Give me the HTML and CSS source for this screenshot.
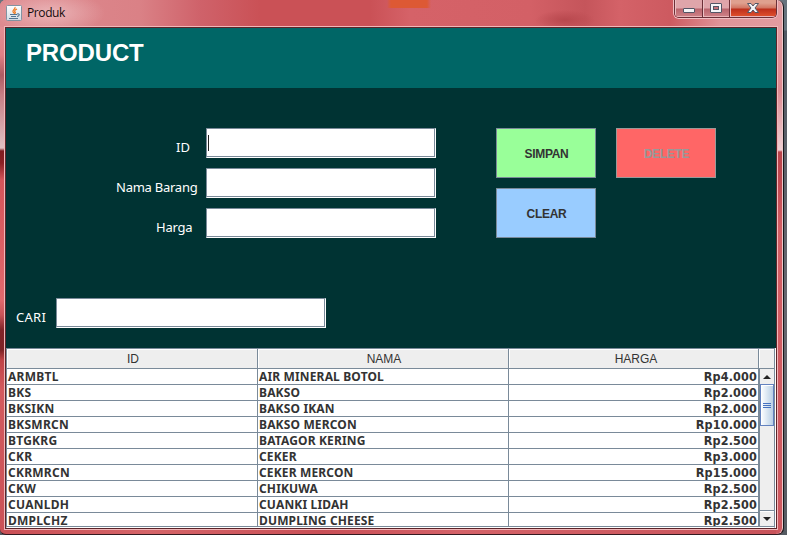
FILE: index.html
```html
<!DOCTYPE html>
<html lang="id">
<head>
<meta charset="utf-8">
<title>Produk</title>
<link rel="stylesheet" href="styles.css">
</head>
<body>
<div class="window">
  <header class="titlebar">
    <svg class="java" width="16" height="16" viewBox="0 0 16 16">
      <defs><linearGradient id="tile" x2="0" y2="1"><stop stop-color="#fff"/><stop offset="1" stop-color="#cfdbe4"/></linearGradient></defs>
      <rect x=".5" y=".5" width="15" height="15" rx="1" fill="url(#tile)" stroke="#8293a2"/>
      <path d="M9 2c1 2-3 3-2 5l1 1M11 4c-2 1-3 2-2 3 1 1 0 1-1 2" fill="none" stroke="#ef7b22" stroke-width="1.2"/>
      <path d="M4 9.5h7M5 11.5h5M3 13.5h9M11 9c3-1 3 2 0 2.500" fill="none" stroke="#537591" stroke-width="1.100"/>
    </svg>
    <span class="caption">Produk</span>
    <div class="controls">
      <span class="ctl min"><svg width="12" height="6"><rect x=".5" y=".5" width="11" height="4" rx=".5" fill="#f4f4f6" stroke="#535666"/></svg></span>
      <span class="ctl max"><svg width="12" height="10"><rect x=".5" y=".5" width="11" height="9" rx=".5" fill="#f4f4f6" stroke="#535666"/><rect x="3.500" y="3.500" width="5" height="3" fill="#c77078" stroke="#535666"/></svg></span>
      <span class="ctl close"><svg width="12" height="10"><path d="M.5.5h3.500l2 2.500 2-2.500h3.500L8 5l3.500 4.500H8L6 7 4 9.500H.5L4 5z" fill="#f4f4f6" stroke="#535666"/></svg></span>
    </div>
  </header>
  <main class="client">
    <div class="banner"><h1>PRODUCT</h1></div>
    <div class="form">
      <div class="entry">
        <div class="fields">
          <label class="row"><span class="id-label">ID</span><span class="field focused"></span></label>
          <label class="row"><span class="name-label">Nama Barang</span><span class="field"></span></label>
          <label class="row"><span class="price-label">Harga</span><span class="field"></span></label>
        </div>
        <div class="actions">
          <button class="save">SIMPAN</button>
          <button class="delete" disabled>DELETE</button>
          <button class="clear">CLEAR</button>
        </div>
      </div>
      <label class="search"><span>CARI</span><span class="field"></span></label>
    </div>
    <div class="table">
      <div class="head"><span>ID</span><span>NAMA</span><span>HARGA</span><span></span></div>
      <div class="body">
        <div class="rows">
          <div class="item"><span>ARMBTL</span><span>AIR MINERAL BOTOL</span><span>Rp4.000</span></div>
          <div class="item"><span>BKS</span><span>BAKSO</span><span>Rp2.000</span></div>
          <div class="item"><span>BKSIKN</span><span>BAKSO IKAN</span><span>Rp2.000</span></div>
          <div class="item"><span>BKSMRCN</span><span>BAKSO MERCON</span><span>Rp10.000</span></div>
          <div class="item"><span>BTGKRG</span><span>BATAGOR KERING</span><span>Rp2.500</span></div>
          <div class="item"><span>CKR</span><span>CEKER</span><span>Rp3.000</span></div>
          <div class="item"><span>CKRMRCN</span><span>CEKER MERCON</span><span>Rp15.000</span></div>
          <div class="item"><span>CKW</span><span>CHIKUWA</span><span>Rp2.500</span></div>
          <div class="item"><span>CUANLDH</span><span>CUANKI LIDAH</span><span>Rp2.500</span></div>
          <div class="item"><span>DMPLCHZ</span><span>DUMPLING CHEESE</span><span>Rp2.500</span></div>
        </div>
        <div class="scrollbar">
          <span class="arrow"><svg width="8" height="4"><path d="M0 4l4-4 4 4z" fill="#222"/></svg></span>
          <span class="thumb"><i></i><i></i><i></i></span>
          <span class="track"></span>
          <span class="arrow down"><svg width="8" height="4"><path d="M0 0l4 4 4-4z" fill="#222"/></svg></span>
        </div>
      </div>
    </div>
  </main>
</div>
</body>
</html>
```
FILE: styles.css
```css
* { box-sizing: border-box; }
body {
  margin: 0;
  width: 787px;
  height: 535px;
  overflow: hidden;
  background: linear-gradient(#67747e 0 30px, #505963 31px, #66676f 300px, #555b62);
  font-family: "Noto Sans", sans-serif;
}
.window {
  width: 784px;
  height: 535px;
  padding: 0 6px 0 4px;
  border-right: 1px solid #17171b;
  border-bottom: 1px solid #351a20;
  border-radius: 6px 7px 7px 6px;
  box-shadow: inset -1px 0 #edc9cb;
  background:
    radial-gradient(ellipse 55px 22px at 50px 13px, #f0c9cbb0, #f0c9cb00),
    linear-gradient(90deg, #dd593400, #dd5934 4px, #dd5934 40px, #dd593400) 387px 0 / 44px 8px no-repeat,
    radial-gradient(ellipse 30px 10px at 565px 20px, #b8484e, #b8484e00),
    linear-gradient(90deg, #de8b90 0, #da8186 140px, #cf626a 200px, #ca5156 260px, #ca5156 370px, #d56268 410px, #d36066 530px, #c5555b 585px, #d46268 620px, #cd5a60 670px, #e09499 720px, #e39ca0) 0 0 / 100% 27px no-repeat,
    linear-gradient(#e28f94 27px, #e08085 55px, #ae5c63 75px, #c77e84 95px, #e0c0c3 148px, #7e1c20 151px, #8a2024 163px, #d4555a 180px, #e0696d 300px, #c85458 315px, #802428 330px, #7d2326 350px, #c04347 360px, #d35a5e 390px, #ca5257) 0 0 / 5px 100% no-repeat,
    linear-gradient(#e39ca0 27px, #dd8990 90px, #efd0d3 150px, #b9444b 152px, #c04951 180px, #d35f65 230px, #ce5960) 100% 0 / 7px 100% no-repeat,
    linear-gradient(90deg, #c94f55, #d56468 150px, #c94f56 320px, #d46268 460px, #c8535a);
}
.titlebar {
  height: 26px;
  display: flex;
  align-items: flex-start;
}
.java { margin: 5px 0 0 2px; }
.caption {
  margin: 5px 0 0 5px;
  font: 12px/16px "Open Sans", sans-serif;
  letter-spacing: -.4px;
  color: #160b0c;
}
.controls {
  display: flex;
  width: 103px;
  height: 18px;
  margin-left: auto;
  border: 1px solid #6c3038;
  border-top: 0;
  border-radius: 0 0 5px 5px;
  overflow: hidden;
  box-shadow: 0 0 0 1px #f0bec2;
}
.ctl {
  display: flex;
  justify-content: center;
  padding-top: 3px;
  width: 28px;
  border-right: 1px solid #6c3038;
  background: linear-gradient(#dfa5aa 0 8px, #b9656d 9px, #cf8288);
  box-shadow: inset 1px 0 #ecc1c4, inset 0 -1px #e9b3b6;
}
.min { padding-top: 8px; }
.max { width: 27px; }
.close {
  flex: 1;
  border: 0;
  background: linear-gradient(#dfa08f 0 3px, #d17562 8px, #bd2f1c 9px, #e2532e);
}
.client {
  width: 774px;
  height: 504px;
  border: 1px solid #f0b8ba;
  outline: 1px solid #5c2429;
  outline-offset: -2px;
  padding: 1px;
  display: flex;
  flex-direction: column;
  background: #003333;
}
.banner { height: 60px; background: #006666; padding: 11px 0 0 20px; }
h1 {
  margin: 0;
  color: #fff;
  font: bold 24px/28px "Liberation Sans", sans-serif;
  letter-spacing: -.15px;
}
.form { height: 260px; padding: 40px 0 0; color: #fff; }
.entry { display: flex; gap: 60px; padding-left: 110px; }
.fields { display: grid; gap: 10px; width: 320px; }
.row { display: flex; justify-content: space-between; font-size: 13px; line-height: 39px; height: 30px; }
.id-label { padding-left: 60px; }
.name-label { letter-spacing: -.25px; }
.price-label { padding-left: 40px; letter-spacing: -.25px; }
.field {
  width: 230px;
  height: 30px;
  background: #fff;
  border: 1px solid #7a8a99;
  border-color: #7a8a99 #fff #fff #7a8a99;
  box-shadow: inset -1px -1px #7a8a99;
}
.focused::before {
  content: "";
  display: block;
  width: 1px;
  height: 16px;
  margin: 6px 0 0 1px;
  background: #222;
}
.actions { display: grid; grid-template-columns: 100px 100px; grid-auto-rows: 50px; gap: 10px 20px; }
button {
  padding: 2px 0 0 1px;
  border: 1px solid #7a8a99;
  font: bold 12px "Liberation Sans", sans-serif;
  letter-spacing: -.3px;
  color: #333;
}
.save { background: #99ff99; }
.delete { background: #ff6666; color: #999; border-color: #999; }
.clear { background: #99ccff; }
.search { display: flex; margin-top: 60px; padding-left: 10px; font-size: 13px; line-height: 39px; height: 30px; }
.search span:first-child { width: 40px; letter-spacing: .3px; }
.search .field { width: 270px; }
.table {
  height: 180px;
  margin-right: 1px;
  background: #fff;
  border: 1px solid #7a8a99;
  border-bottom-color: #fff;
  box-shadow: 1px 0 #fff;
}
.head {
  display: grid;
  grid-template: 19px / 251px 251px 250px 1fr;
  height: 20px;
  border-bottom: 1px solid #7a8a99;
  font: 12px/21px "Liberation Sans", sans-serif;
  text-align: center;
  color: #333;
}
.head span { background: #eee; border-right: 1px solid #7a8a99; box-shadow: inset 1px 1px #fff; padding-left: 2px; }
.head span:nth-child(3) { padding-left: 5px; }
.head span:last-child { border: 0; }
.body { height: 158px; display: flex; border-bottom: 1px solid #7a8a99; }
.rows { width: 752px; overflow: hidden; }
.item {
  display: grid;
  grid-template: 15px / 251px 251px 250px;
  height: 16px;
  border-bottom: 1px solid #7a8a99;
  font-weight: bold;
  font-size: 12px;
  line-height: 15px;
  letter-spacing: .15px;
  color: #333;
  white-space: nowrap;
}
.item span { border-right: 1px solid #7a8a99; padding: 0 1px; height: 15px; }
.item span:first-child { letter-spacing: .25px; }
.item span:last-child {
  text-align: right;
  font-family: "DejaVu Sans Condensed", "DejaVu Sans", sans-serif;
  font-stretch: condensed;
  font-size: 12.5px;
  line-height: 16px;
  letter-spacing: .15px;
}
.scrollbar { flex: 1; display: flex; flex-direction: column; border-left: 1px solid #7a8a99; }
.arrow {
  height: 15px;
  display: flex;
  align-items: center;
  justify-content: center;
  background: #eee;
}
.thumb {
  height: 42px;
  display: flex;
  flex-direction: column;
  align-items: center;
  justify-content: center;
  gap: 1px;
  border: 1px solid #6382bf;
  box-shadow: inset 1px 1px #fff;
  background: linear-gradient(90deg, #fff, #b8cfe5);
}
.thumb i { width: 8px; height: 1px; background: #4672c0; }
.track { flex: 1; background: #eee; }
.down { height: 16px; border-top: 1px solid #7a8a99; box-shadow: inset 0 1px #fff; }
```
